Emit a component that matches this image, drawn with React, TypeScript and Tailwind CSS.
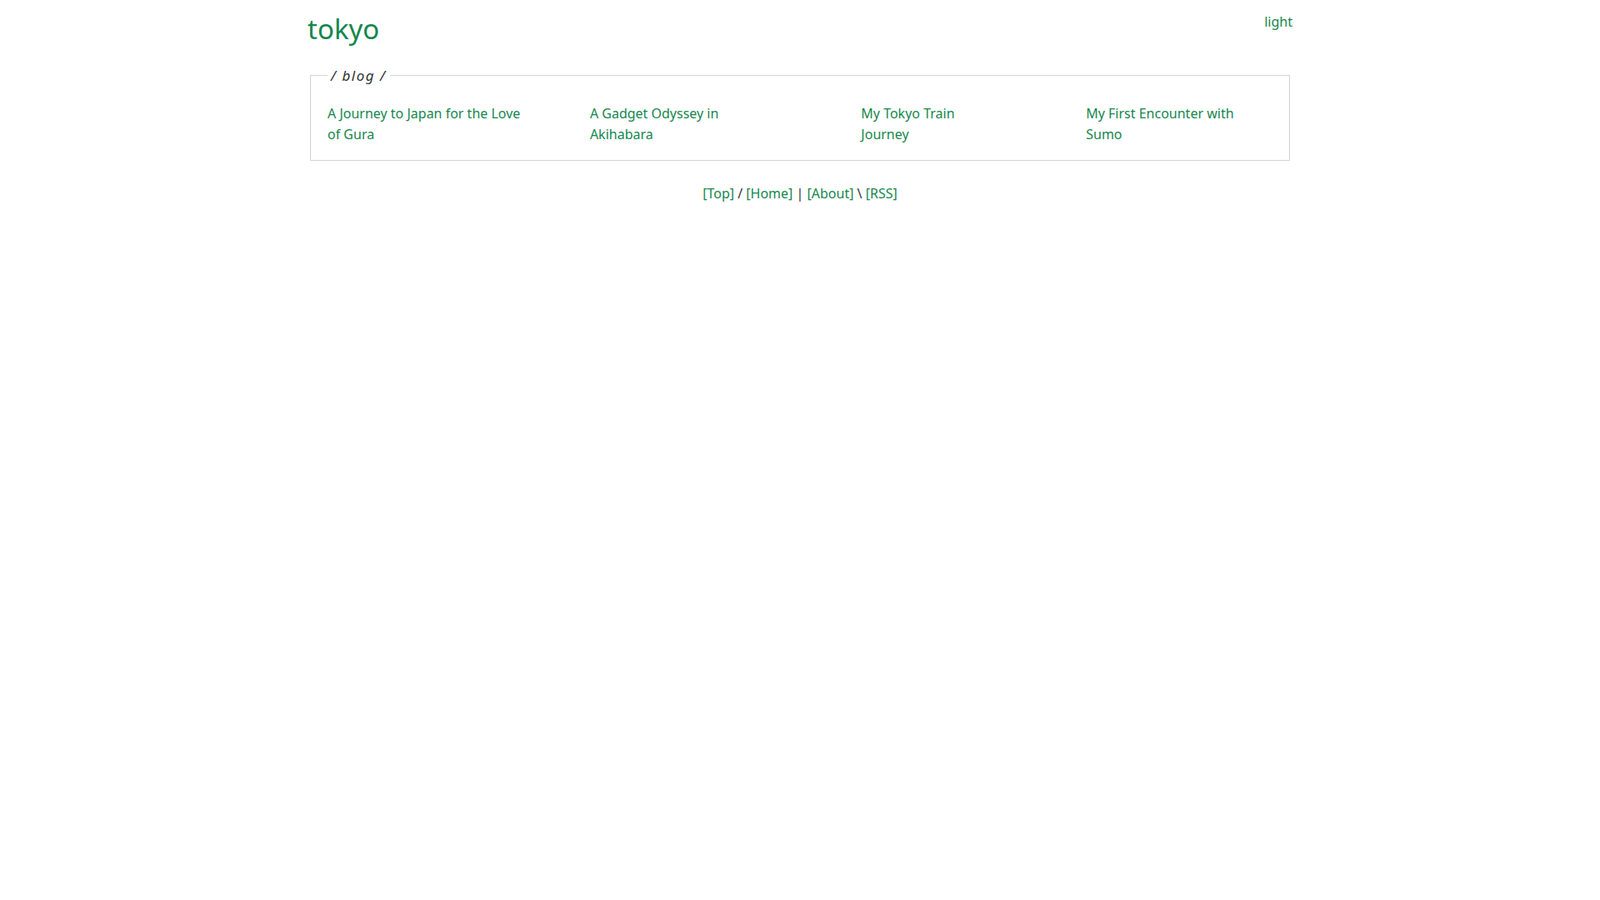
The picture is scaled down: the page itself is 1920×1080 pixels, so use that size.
export default function App() {
  const posts = [
    { title: "A Journey to Japan for the Love of Gura", w: "w-[250px]", ml: "ml-0" },
    { title: "A Gadget Odyssey in Akihabara", w: "w-auto", ml: "ml-[66px]" },
    { title: "My Tokyo Train Journey", w: "w-auto", ml: "ml-[92px]" },
    { title: "My First Encounter with Sumo", w: "w-auto", ml: "ml-[97px]" },
  ];
  return (
    <div className="min-h-screen bg-white font-['Liberation_Sans',Arial,sans-serif] text-[#15874d]">
      <div className="mx-auto w-[1182px] ml-[369px]">
        <header className="flex justify-between items-start">
          <a className="text-[33px] leading-none mt-[18px]">tokyo</a>
          <a className="text-[16px] mt-[14px]">light</a>
        </header>
        <fieldset className="mt-[27px] mx-[3px] border border-[#d0d5da] px-[20px] pb-[18px] pt-[20px]">
          <legend className="px-[4px] italic tracking-[1.5px] text-[#333] text-[17px]">/ blog /</legend>
          <div className="flex items-center text-[16px] leading-[25px]">
            {posts.map((p) => (
              <a key={p.title} className={`${p.w} ${p.ml}`}>
                {p.title}
              </a>
            ))}
          </div>
        </fieldset>
        <nav className="mt-[27px] text-center text-[16px] text-[#333]">
          <a className="text-[#15874d]">[Top]</a> / <a className="text-[#15874d]">[Home]</a> |{" "}
          <a className="text-[#15874d]">[About]</a> \ <a className="text-[#15874d]">[RSS]</a>
        </nav>
      </div>
    </div>
  );
}
